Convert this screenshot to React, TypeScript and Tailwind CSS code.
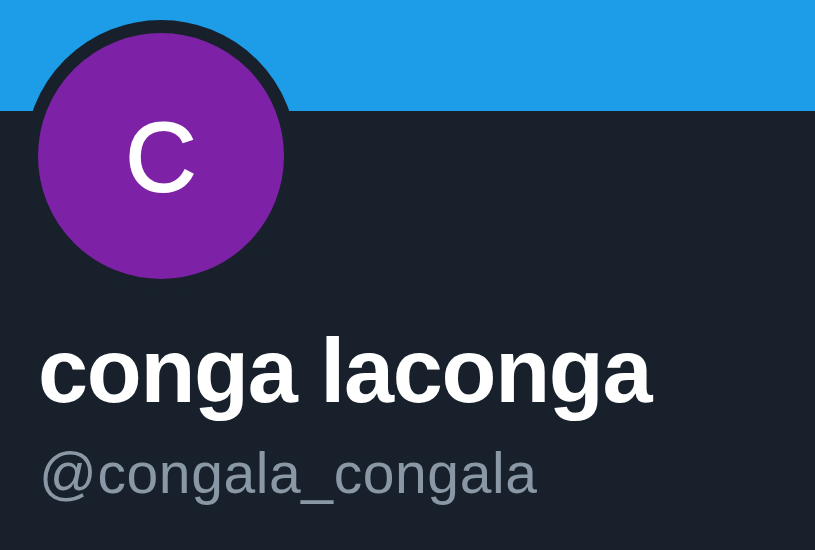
export default function App() {
  return (
    <div className="w-[815px] h-[550px] bg-[#17202b] overflow-hidden">
      {/* banner */}
      <div className="h-[111px] bg-[#1d9ce8]" />
      <div className="pl-[25px]">
        {/* avatar sits over the banner edge */}
        <div className="-mt-[91px] w-[272px] h-[272px] rounded-full border-[13px] border-[#17202b] bg-[#7d22a6] flex items-center justify-center">
          <span className="text-white text-[98px] leading-none [-webkit-text-stroke:2px_white] font-['Liberation_Sans',Arial,sans-serif] mt-[2px]">C</span>
        </div>
        <div className="ml-[13px] mt-[34px] text-white font-bold text-[90px] leading-none tracking-[-1.3px] font-['Liberation_Sans',Arial,sans-serif]">
          conga laconga
        </div>
        <div className="ml-[14px] mt-[29px] text-[#8a98a5] text-[57px] leading-none tracking-[0.6px] font-['Liberation_Sans',Arial,sans-serif]">
          @congala_congala
        </div>
      </div>
    </div>
  );
}
